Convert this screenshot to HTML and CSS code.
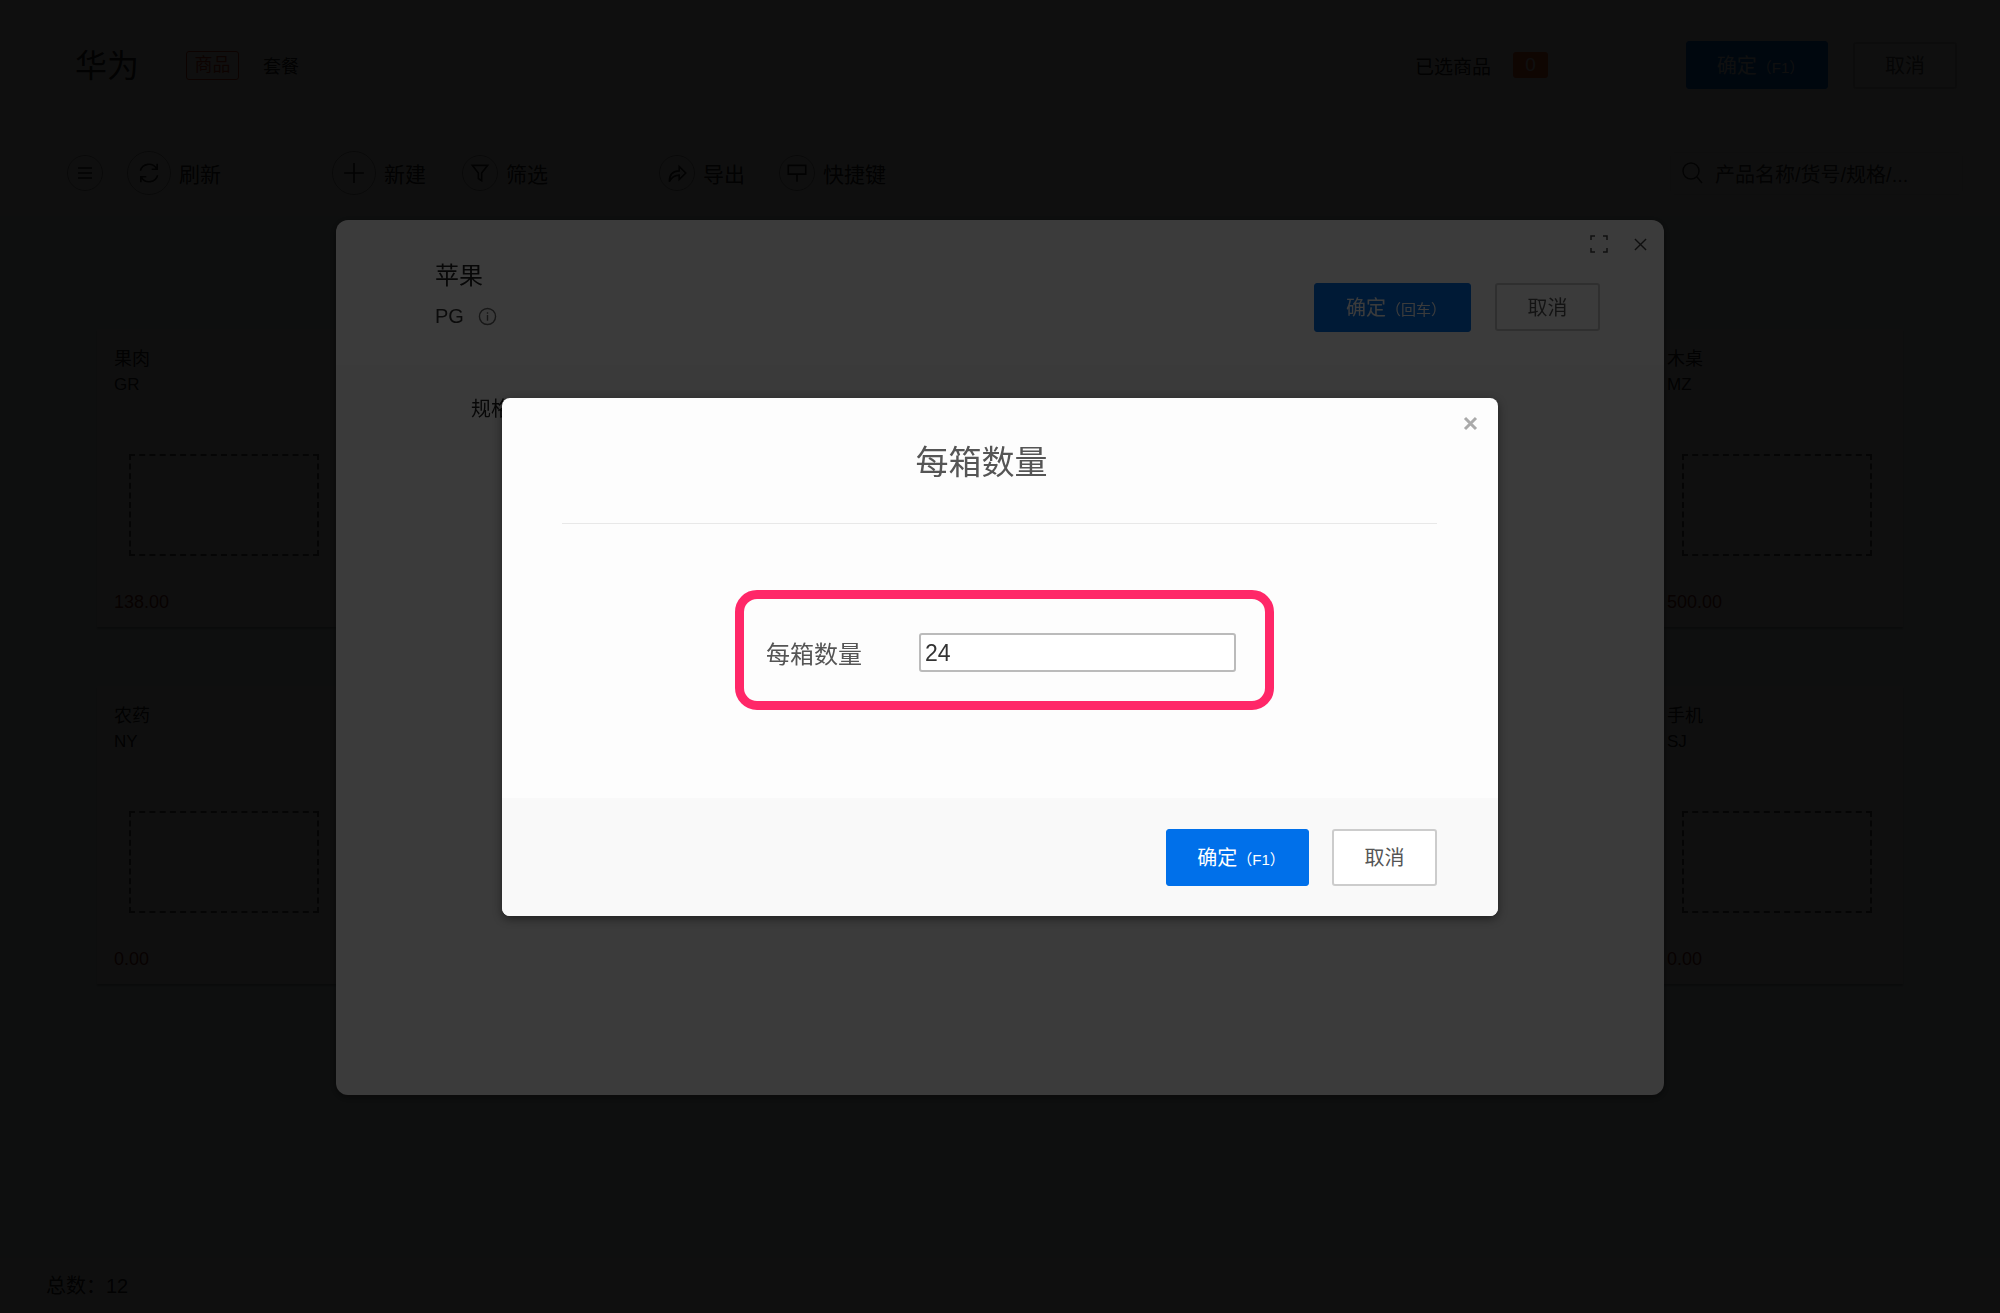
FILE: index.html
```html
<!DOCTYPE html>
<html lang="zh-CN">
<head>
    <meta charset="UTF-8">
    <meta name="viewport" content="width=device-width, initial-scale=1.0">
    <title>华为 商品</title>
    <link rel="stylesheet" href="styles.css">
</head>
<body>
    <div class="page">
        <div class="topbar">
            <h1 class="brand">华为</h1>
            <span class="tab tab-active">商品</span>
            <span class="tab">套餐</span>
            <div class="selected">
                <span>已选商品</span>
                <span class="badge">0</span>
            </div>
            <button class="btn btn-primary btn-top">确定<small>（F1）</small></button>
            <button class="btn btn-plain btn-top-cancel">取消</button>
        </div>

        <div class="toolbar">
            <div class="tool-group tool-group-first">
                <span class="circle">
                    <svg width="18" height="18" viewBox="0 0 18 18"><path d="M2 4h14M2 9h14M2 14h14"/></svg>
                </span>
                <span class="tool">
                    <span class="circle circle-big">
                        <svg width="26" height="26" viewBox="0 0 24 24"><path d="M4 10a8.200 8.200 0 0 1 15-2M20 14a8.200 8.200 0 0 1-15 2M19.500 3.500V8.500H14.500M4.500 20.500V15.500H9.500"/></svg>
                    </span>
                    刷新
                </span>
            </div>
            <div class="tool-group">
                <span class="tool">
                    <span class="circle circle-big">
                        <svg width="22" height="22" viewBox="0 0 20 20"><path d="M10 1v18M1 10h18"/></svg>
                    </span>
                    新建
                </span>
                <span class="tool">
                    <span class="circle">
                        <svg width="22" height="22" viewBox="0 0 20 20"><path d="M3 3h14l-5.500 7v7l-3-2v-5z"/></svg>
                    </span>
                    筛选
                </span>
            </div>
            <div class="tool-group tool-group-last">
                <span class="tool">
                    <span class="circle">
                        <svg width="24" height="24" viewBox="0 0 22 22"><path d="M4 19c0-7 3-10 9-10V5l6 6-6 6v-4c-4 0-7 2-9 6z"/></svg>
                    </span>
                    导出
                </span>
                <span class="tool">
                    <span class="circle">
                        <svg width="24" height="24" viewBox="0 0 22 22"><path d="M3 4h16v8H3zM11 12v7"/></svg>
                    </span>
                    快捷键
                </span>
            </div>
            <div class="search">
                <svg width="22" height="24" viewBox="0 0 22 24"><circle cx="10" cy="10" r="8"/><path d="M16 16l5 6"/></svg>
                <span>产品名称/货号/规格/...</span>
            </div>
        </div>

        <div class="content">
            <div class="cards">
                <div class="card">
                    <div class="card-name">果肉</div>
                    <div class="card-code">GR</div>
                    <div class="card-pic"></div>
                    <div class="card-price">138.00</div>
                </div>
                <div class="card">
                    <div class="card-name">木桌</div>
                    <div class="card-code">MZ</div>
                    <div class="card-pic"></div>
                    <div class="card-price">500.00</div>
                </div>
                <div class="card">
                    <div class="card-name">农药</div>
                    <div class="card-code">NY</div>
                    <div class="card-pic"></div>
                    <div class="card-price">0.00</div>
                </div>
                <div class="card">
                    <div class="card-name">手机</div>
                    <div class="card-code">SJ</div>
                    <div class="card-pic"></div>
                    <div class="card-price">0.00</div>
                </div>
            </div>
        </div>

        <div class="footer">总数：12</div>
    </div>

    <!-- product dialog -->
    <div class="mask mask-first">
        <div class="dialog">
            <div class="dialog-icons">
                <svg width="18" height="18" viewBox="0 0 18 18"><path d="M1 5V1h4M13 1h4v4M17 13v4h-4M5 17H1v-4"/></svg>
                <svg width="13" height="13" viewBox="0 0 14 14"><path d="M1 1l12 12M13 1L1 13"/></svg>
            </div>
            <div class="dialog-head">
                <div>
                    <div class="dialog-name">苹果</div>
                    <div class="dialog-code">PG
                        <svg width="19" height="19" viewBox="0 0 20 20"><circle cx="10" cy="10" r="8.500"/><path d="M10 8.500v6M10 5.500v1.500"/></svg>
                    </div>
                </div>
                <div class="dialog-actions">
                    <button class="btn btn-primary btn-mid">确定<small>（回车）</small></button>
                    <button class="btn btn-plain btn-mid-cancel">取消</button>
                </div>
            </div>
            <div class="spec-row">
                <span class="spec-first">规格</span>
                <span class="spec-second">每箱数量（件/箱）</span>
            </div>
        </div>
    </div>

    <!-- quantity dialog -->
    <div class="mask mask-second">
        <div class="qty-dialog">
            <span class="qty-close">
                <svg width="15" height="15" viewBox="0 0 15 15"><path d="M2 2l11 11M13 2L2 13"/></svg>
            </span>
            <div class="qty-title"><span>每箱数量</span></div>
            <div class="qty-body">
                <div class="qty-field">
                    <label class="qty-label" for="qty">每箱数量</label>
                    <input class="qty-input" id="qty" type="text" value="24">
                </div>
            </div>
            <div class="qty-footer">
                <button class="btn btn-primary btn-qty">确定<small>（F1）</small></button>
                <button class="btn btn-plain btn-qty-cancel">取消</button>
            </div>
        </div>
    </div>
</body>
</html>
```

FILE: styles.css
```css
* {
    box-sizing: border-box;
}

body {
    margin: 0;
    font-family: "Liberation Sans", "Noto Sans CJK SC", sans-serif;
    color: #222;
    background-color: #fff;
}

.page {
    height: 1313px;
    display: flex;
    flex-direction: column;
    overflow: hidden;
}

/* top bar */
.topbar {
    height: 130px;
    flex-shrink: 0;
    display: flex;
    align-items: center;
    padding: 0 43px 0 75px;
}

.brand {
    margin: 0 47px 4px 0;
    font-size: 32px;
    font-weight: normal;
}

.tab {
    font-size: 18px;
    margin-right: 24px;
}

.tab-active {
    width: 53px;
    height: 29px;
    line-height: 27px;
    text-align: center;
    color: #d03a14;
    border: 1px solid #d03a14;
    border-radius: 3px;
}

.selected {
    margin-left: auto;
    margin-right: 138px;
    display: flex;
    align-items: center;
    gap: 22px;
    font-size: 19px;
}

.badge {
    width: 35px;
    height: 26px;
    line-height: 26px;
    text-align: center;
    color: #fff;
    background-color: #f0602c;
    border-radius: 3px;
}

.btn {
    padding: 0 0 2px;
    font-family: inherit;
    font-size: 20px;
    border-radius: 3px;
    cursor: pointer;
}

.btn small {
    font-size: 15px;
}

.btn-primary {
    padding-left: 7px;
    color: #fff;
    background-color: #0070ea;
    border: 1px solid #0070ea;
}

.btn-plain {
    color: #555;
    background-color: #fff;
    border: 2px solid #ccc;
}

.btn-top {
    width: 142px;
    height: 48px;
    margin-right: 25px;
}

.btn-top-cancel {
    width: 104px;
    height: 47px;
}

/* toolbar */
.toolbar {
    height: 86px;
    flex-shrink: 0;
    display: flex;
    align-items: center;
    padding: 0 37px 0 67px;
    font-size: 21px;
}

.tool-group {
    display: flex;
    align-items: center;
    gap: 36px;
    margin-right: 111px;
}

.tool-group-first {
    gap: 24px;
}

.tool-group-last {
    gap: 34px;
}

.tool {
    display: flex;
    align-items: center;
    gap: 8px;
}

.circle {
    width: 36px;
    height: 36px;
    display: flex;
    align-items: center;
    justify-content: center;
    border: 1px solid #999;
    border-radius: 50%;
}

.circle-big {
    width: 44px;
    height: 44px;
}

.toolbar svg,
.dialog svg,
.qty-close svg {
    fill: none;
    stroke: currentColor;
    stroke-width: 1.5;
}

.search {
    margin-left: auto;
    margin-right: 0;
    width: 293px;
    height: 43px;
    display: flex;
    align-items: center;
    gap: 12px;
    padding-left: 10px;
    font-size: 20px;
    color: #333;
    border: 1px solid #eee;
    border-radius: 4px;
}

/* cards */
.content {
    flex: 1;
    padding: 113px 97px 0;
    background-color: #ecfffa;
}

.cards {
    display: grid;
    grid-template-columns: 253px 253px;
    justify-content: space-between;
    row-gap: 59px;
}

.card {
    height: 298px;
    padding-top: 17px;
    padding-left: 17px;
    background-color: #fff;
    box-shadow: 0 2px 2px rgba(0, 0, 0, 0.3);
}

.card-name {
    font-size: 18px;
    line-height: 26px;
}

.card-code {
    font-size: 17px;
    line-height: 26px;
}

.card-pic {
    width: 190px;
    height: 102px;
    margin: 56px 0 0 15px;
    border: 2px dashed #555;
}

.card-price {
    margin-top: 33px;
    font-size: 18px;
    line-height: 26px;
    color: #802010;
}

.footer {
    height: 55px;
    flex-shrink: 0;
    display: flex;
    align-items: center;
    padding: 0 0 2px 46px;
    font-size: 20px;
}

/* masks and dialogs */
.mask {
    position: fixed;
    top: 0;
    left: 0;
    width: 100%;
    height: 100%;
    display: flex;
    align-items: center;
    justify-content: center;
}

.mask-first {
    background-color: rgba(0, 0, 0, 0.74);
}

.mask-second {
    background-color: rgba(0, 0, 0, 0.77);
}

.dialog {
    position: relative;
    width: 1328px;
    height: 875px;
    margin-top: 2px;
    background-color: #fff;
    border-radius: 12px;
    box-shadow: 0 2px 10px rgba(0, 0, 0, 0.5);
}

.dialog-icons {
    position: absolute;
    top: 15px;
    right: 17px;
    display: flex;
    align-items: center;
    gap: 26px;
    color: #444;
}

.dialog-head {
    height: 145px;
    display: flex;
    justify-content: space-between;
    padding: 39px 64px 0 99px;
}

.dialog-name {
    font-size: 24px;
    line-height: 34px;
}

.dialog-code {
    margin-top: 6px;
    display: flex;
    align-items: center;
    gap: 14px;
    font-size: 20px;
    line-height: 34px;
    color: #333;
}

.dialog-code svg {
    color: #666;
}

.dialog-actions {
    display: flex;
    align-items: flex-start;
    gap: 24px;
    margin-top: 24px;
}

.btn-mid {
    width: 157px;
    height: 49px;
}

.btn-mid-cancel {
    width: 105px;
    height: 48px;
}

.spec-row {
    height: 85px;
    display: flex;
    align-items: center;
    padding-left: 135px;
    font-size: 20px;
    background-color: #fafafa;
}

.spec-second {
    margin-left: 331px;
}

.qty-dialog {
    position: relative;
    width: 996px;
    height: 518px;
    display: flex;
    flex-direction: column;
    background-color: #fdfdfd;
    border-radius: 8px;
    overflow: hidden;
    box-shadow: 0 3px 10px rgba(0, 0, 0, 0.45);
}

.qty-close {
    position: absolute;
    top: 18px;
    right: 20px;
    color: #aaa;
}

.qty-close svg {
    stroke-width: 3;
    display: block;
}

.qty-title {
    height: 126px;
    margin: 0 61px 0 60px;
    padding-right: 36px;
    display: flex;
    align-items: center;
    justify-content: center;
    font-size: 33px;
    color: #555;
    border-bottom: 1px solid #e8e8e8;
}

.qty-body {
    flex: 1;
    padding: 66px 0 0 233px;
}

.qty-field {
    width: 539px;
    height: 120px;
    display: flex;
    align-items: center;
    gap: 57px;
    padding: 5px 0 0 22px;
    border: 9px solid #ff2768;
    border-radius: 22px;
}

.qty-label {
    font-size: 24px;
    color: #555;
}

.qty-input {
    width: 317px;
    height: 39px;
    padding: 2px 4px 0;
    font-family: inherit;
    font-size: 23px;
    color: #333;
    background-color: #fff;
    border: 2px solid #bbb;
    border-radius: 3px;
}

.qty-footer {
    height: 118px;
    flex-shrink: 0;
    display: flex;
    justify-content: flex-end;
    align-items: flex-start;
    gap: 23px;
    padding: 31px 61px 0 0;
    background-color: #f9f9f9;
}

.btn-qty {
    width: 143px;
    height: 57px;
}

.btn-qty-cancel {
    width: 105px;
    height: 57px;
}
```
